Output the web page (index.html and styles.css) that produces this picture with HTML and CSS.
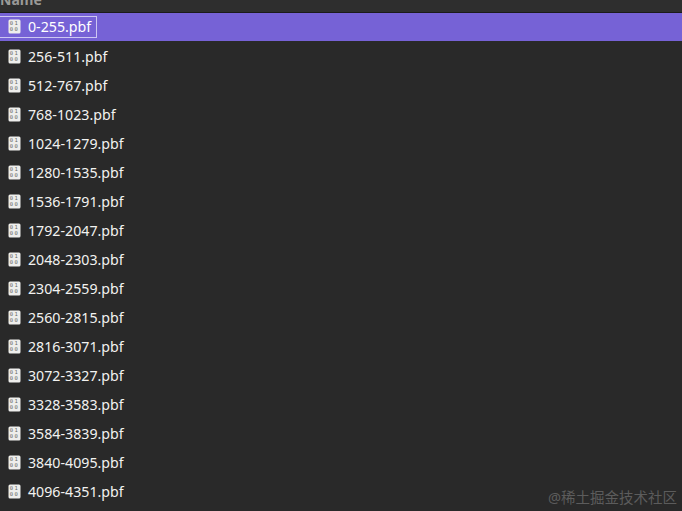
FILE: index.html
```html
<!DOCTYPE html>
<html>
<head>
    <meta charset="utf-8">
    <link rel="stylesheet" href="styles.css">
</head>
<body>
    <div class="header"><span class="header-label">Name</span></div>
    <div id="list" class="file-list"></div>
    <div class="watermark">@稀土掘金技术社区</div>

    <script>
        var files = ['0-255', '256-511', '512-767', '768-1023', '1024-1279', '1280-1535', '1536-1791',
            '1792-2047', '2048-2303', '2304-2559', '2560-2815', '2816-3071', '3072-3327', '3328-3583',
            '3584-3839', '3840-4095', '4096-4351'];
        var list = document.getElementById('list');

        files.forEach(function(name, i) {
            var row = document.createElement('div');
            row.className = i === 0 ? 'row selected' : 'row';
            row.innerHTML = '<div class="cell"><svg class="file-icon" width="13" height="15" viewBox="0 0 13 15">' +
                '<rect x="0.5" y="0.5" width="12" height="14" rx="1.5" fill="#eeeeec"/>' +
                '<text x="6.5" y="6.4" class="bits">01</text>' +
                '<text x="6.5" y="12.4" class="bits">00</text></svg>' +
                '<span class="file-name">' + name + '.pbf</span></div>';
            list.appendChild(row);
        });
    </script>
</body>
</html>
```

FILE: styles.css
```css
html, body {
    margin: 0;
    height: 511px;
    overflow: hidden;
}
body {
    position: relative;
    background-color: #292929;
    font-family: "Noto Sans", "Open Sans", sans-serif;
    color: #f2f2f0;
}
.header {
    height: 12px;
    overflow: hidden;
    background-color: #2e2e2e;
    border-bottom: 1px solid #1b1b1b;
}
.header-label {
    display: block;
    margin-top: -9px;
    font-size: 14px;
    line-height: 18px;
    font-weight: bold;
    color: #9a9a98;
}
.row {
    display: flex;
    align-items: center;
    height: 29px;
    font-size: 14.2px;
}
.cell {
    display: flex;
    align-items: center;
    gap: 7px;
    height: 20px;
    padding-left: 8px;
    padding-right: 5px;
    border: 1px solid transparent;
    border-left: none;
}
.selected {
    height: 28px;
    margin-bottom: 1px;
    background-color: #7662d6;
    color: #ffffff;
}
.selected .cell {
    border-color: #cdc7f2;
}
.file-icon {
    flex: none;
    margin-top: -1px;
}
.bits {
    font-family: "DejaVu Sans Mono", monospace;
    font-size: 5.5px;
    letter-spacing: 1.5px;
    text-anchor: middle;
    fill: #666864;
}
.file-name {
    line-height: 18px;
}
.watermark {
    position: absolute;
    right: 5px;
    top: 488px;
    font-family: "Noto Sans", "Noto Sans CJK SC", sans-serif;
    font-size: 14.5px;
    line-height: 18px;
    color: #5c5c5c;
}
```
